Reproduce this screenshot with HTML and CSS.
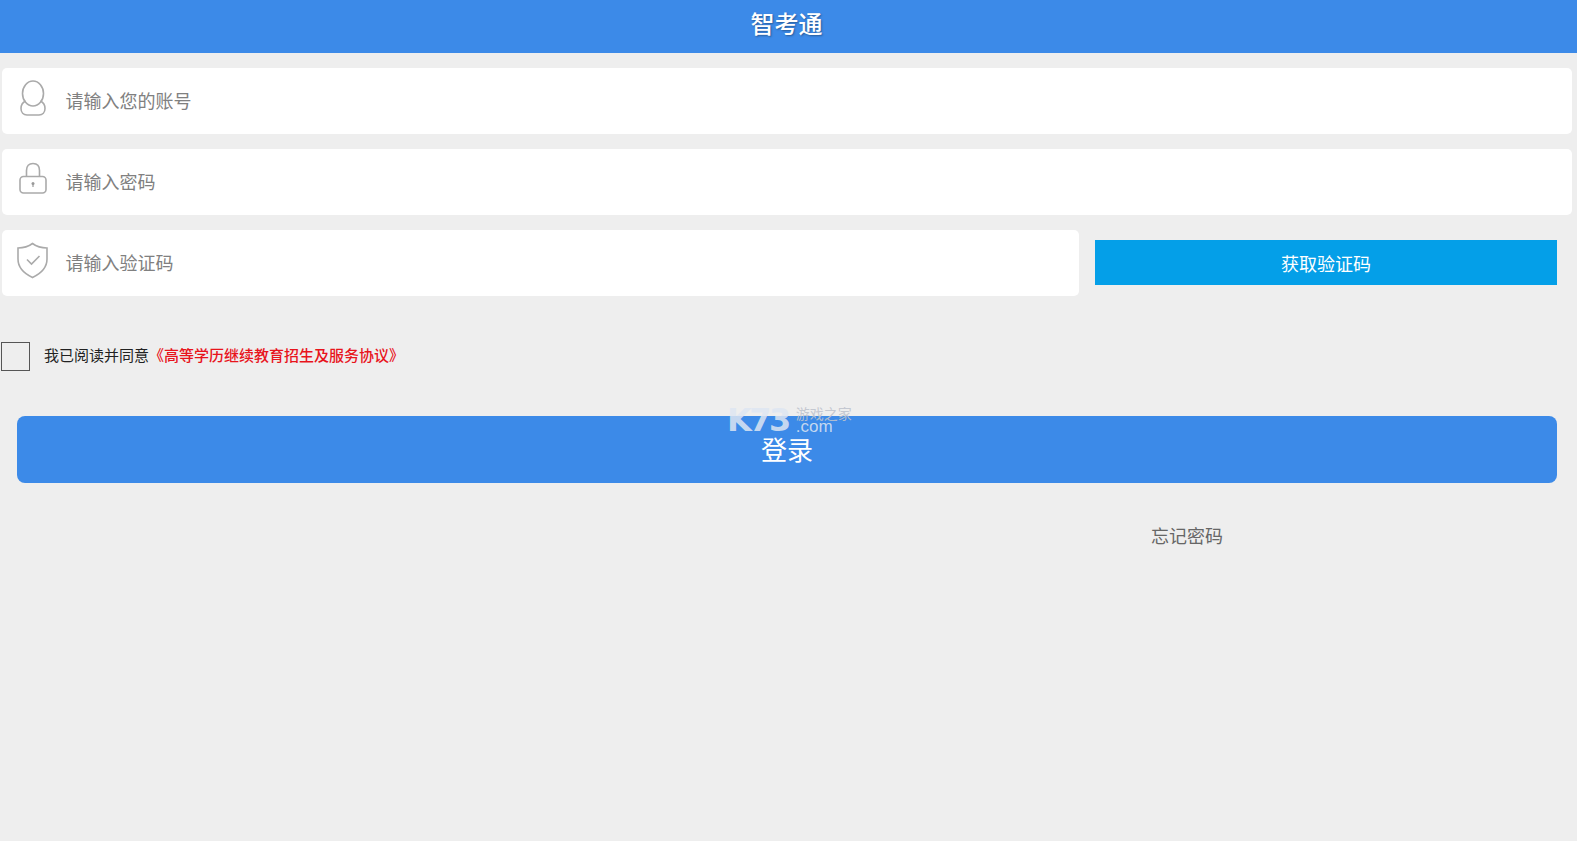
FILE: index.html
```html
<!DOCTYPE html>
<html>
<head>
    <title>智考通</title>
    <meta name="viewport" content="width=device-width, initial-scale=1">
    <link rel="stylesheet" href="styles.css">
</head>
<body>
    <div class="header">智考通</div>

    <div class="field">
        <svg class="field-icon" width="34" height="38" viewBox="0 0 34 38">
            <ellipse cx="17" cy="13.500" rx="10.500" ry="12.500"/>
            <path d="M9.500 21C6.500 22.500 5 25 5 28.500C5 32.500 7.500 35 11 35H23C26.500 35 29 32.500 29 28.500C29 25 27.500 22.500 24.500 21"/>
        </svg>
        <span class="placeholder">请输入您的账号</span>
    </div>

    <div class="field">
        <svg class="field-icon" width="34" height="38" viewBox="0 0 34 38">
            <path d="M10.500 15.500V9.500C10.500 5 13 2.500 17 2.500C21 2.500 23.500 5 23.500 9.500V15.500"/>
            <rect x="4" y="15.500" width="26" height="16.500" rx="3.500"/>
            <circle class="keyhole" cx="17" cy="22.500" r="1.500"/>
            <path class="keyhole-stem" d="M17 23V26"/>
        </svg>
        <span class="placeholder">请输入密码</span>
    </div>

    <div class="code-row">
        <div class="field field-code">
            <svg class="field-icon" width="34" height="38" viewBox="0 0 34 38">
                <path d="M16.500 1.500C12.500 4.500 7 6 2 6V17C2 25 8 31.500 16.500 35.500C25 31.500 31 25 31 17V6C26 6 20.500 4.500 16.500 1.500Z"/>
                <path d="M11 17.500L15.500 22L23.500 14"/>
            </svg>
            <span class="placeholder">请输入验证码</span>
        </div>
        <div class="code-btn">获取验证码</div>
    </div>

    <div class="agree">
        <span class="checkbox"></span>
        <span class="agree-text">我已阅读并同意<span class="agree-link">《高等学历继续教育招生及服务协议》</span></span>
    </div>

    <div class="login-wrap">
        <div class="login-btn">登录</div>
        <div class="watermark">
            <span class="wm-logo">K73</span>
            <span class="wm-side">
                <span class="wm-cn">游戏之家</span>
                <span class="wm-com">.com</span>
            </span>
        </div>
    </div>

    <div class="forget-row">
        <span class="forget">忘记密码</span>
    </div>
</body>
</html>
```

FILE: styles.css
```css
body {
    margin: 0;
    height: 841px;
    overflow: hidden;
    background-color: #eeeeee;
    font-family: "Noto Sans CJK SC", "Liberation Sans", sans-serif;
}

.header {
    height: 53px;
    line-height: 46px;
    padding-right: 4px;
    text-align: center;
    font-size: 24px;
    font-weight: 500;
    color: #fff;
    background-color: #3c8ae8;
    text-shadow: 1px 1px 2px rgba(0, 0, 0, 0.35);
}

.field {
    display: flex;
    align-items: center;
    height: 66px;
    margin: 15px 5px 0 2px;
    background-color: #fff;
    border-radius: 5px;
}

.field-icon {
    flex: none;
    margin: -4px 16px 0 13.5px;
    fill: none;
    stroke: #aaaaaa;
    stroke-width: 1.6;
}

.keyhole {
    fill: #999999;
    stroke: none;
}

.keyhole-stem {
    stroke: #999999;
    stroke-width: 1.2;
}

.placeholder {
    position: relative;
    top: -1px;
    font-size: 18px;
    color: #808080;
}

.code-row {
    display: flex;
    align-items: flex-start;
}

.field-code {
    flex: none;
    width: 1077px;
    margin-right: 16px;
}

.code-btn {
    width: 462px;
    height: 45px;
    margin-top: 25px;
    line-height: 46px;
    text-align: center;
    font-size: 18px;
    color: #fff;
    background-color: #049fe8;
}

.agree {
    display: flex;
    align-items: center;
    margin: 46px 0 0 1px;
}

.checkbox {
    flex: none;
    width: 27px;
    height: 27px;
    border: 1.5px solid #555555;
    margin-right: 14px;
}

.agree-text {
    position: relative;
    top: -2px;
    font-size: 15px;
    color: #222222;
}

.agree-link {
    font-weight: 500;
    color: #e8141c;
}

.login-wrap {
    position: relative;
    margin: 45px 20px 0 17px;
}

.login-btn {
    height: 67px;
    line-height: 65px;
    text-align: center;
    font-size: 26px;
    color: #fff;
    background-color: #3c8ae8;
    border-radius: 8px;
}

.watermark {
    position: absolute;
    left: 710px;
    top: -10px;
    display: flex;
    color: rgba(222, 230, 242, 0.85);
}

.wm-logo {
    font-family: "DejaVu Sans", sans-serif;
    font-size: 32px;
    font-weight: bold;
    line-height: 29px;
    letter-spacing: -2.5px;
}

.wm-side {
    display: flex;
    flex-direction: column;
    margin-left: 7px;
}

.wm-cn {
    font-size: 14px;
    line-height: 14px;
    color: rgba(190, 195, 205, 0.9);
}

.wm-com {
    font-family: "Liberation Sans", sans-serif;
    font-size: 17px;
    line-height: 14px;
}

.forget-row {
    margin-top: 39px;
    padding-left: 1151px;
}

.forget {
    font-size: 18px;
    color: #666666;
}
```
